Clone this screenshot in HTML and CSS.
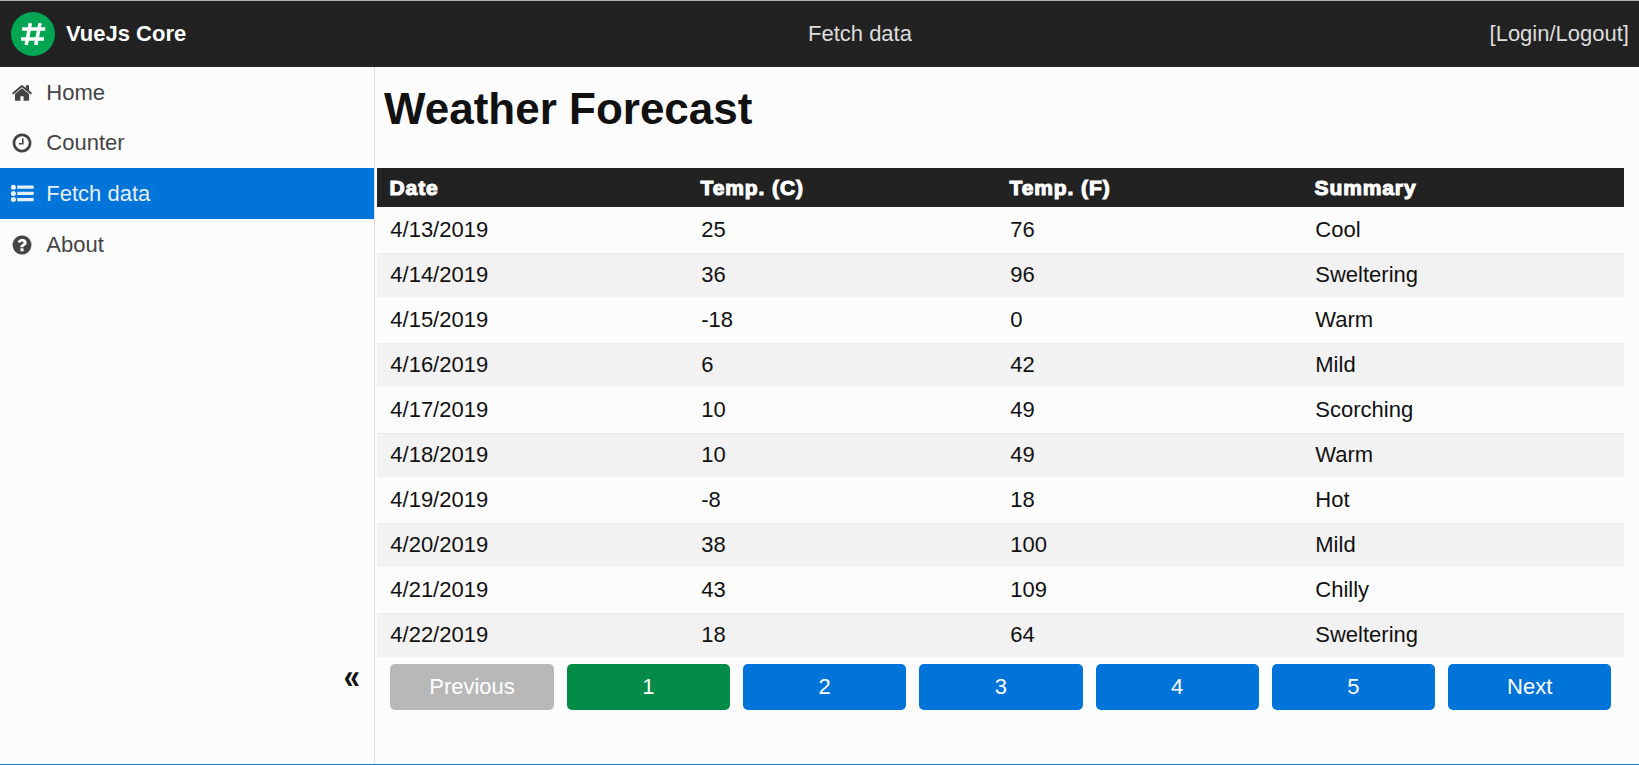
FILE: index.html
```html
<!DOCTYPE html>
<html lang="en">
<head>
<meta charset="utf-8">
<title>VueJs Core</title>
<link rel="stylesheet" href="styles.css">
</head>
<body>
<header class="topbar">
  <div class="brand">
    <svg class="logo" viewBox="0 0 44 44"><circle cx="22" cy="22" r="22" fill="#00a651"/><path d="M19.4 11.2 15.2 32.8M29 11.2 24.8 32.8M11.2 17H34.2M10 27H33" fill="none" stroke="#fff" stroke-width="3.5"/></svg>
    <span>VueJs Core</span>
  </div>
  <div class="title">Fetch data</div>
  <div class="login">[Login/Logout]</div>
</header>
<div class="shell">
  <aside class="sidebar">
    <nav>
      <a class="item"><svg class="icon" viewBox="0 0 1792 1792"><path d="M1472 992v480q0 26-19 45t-45 19h-384v-384h-256v384h-384q-26 0-45-19t-19-45v-480q0-1 .5-3t.5-3l575-474 575 474q1 2 1 6zm223-69l-62 74q-8 9-21 11h-3q-13 0-21-7l-692-577-692 577q-12 8-24 7-13-2-21-11l-62-74q-8-10-7-23.5t11-21.5l719-599q32-26 76-26t76 26l244 204v-195q0-14 9-23t23-9h192q14 0 23 9t9 23v408l219 182q10 8 11 21.5t-7 23.5z"/></svg>Home</a>
      <a class="item"><svg class="icon" viewBox="0 0 1792 1792"><path d="M1024 544v448q0 14-9 23t-23 9h-320q-14 0-23-9t-9-23v-64q0-14 9-23t23-9h224v-352q0-14 9-23t23-9h64q14 0 23 9t9 23zm416 352q0-148-73-273t-198-198-273-73-273 73-198 198-73 273 73 273 198 198 273 73 273-73 198-198 73-273zm224 0q0 209-103 385.5t-279.5 279.5-385.5 103-385.5-103-279.5-279.5-103-385.5 103-385.5 279.5-279.5 385.5-103 385.5 103 279.5 279.5 103 385.5z"/></svg>Counter</a>
      <a class="item active"><svg class="icon" viewBox="0 0 22 22"><circle cx="2.4" cy="4.2" r="2.5"/><circle cx="2.4" cy="10.4" r="2.5"/><circle cx="2.4" cy="16.6" r="2.5"/><rect x="6.2" y="2.5" width="16.5" height="3.3" rx=".5"/><rect x="6.2" y="8.7" width="16.5" height="3.3" rx=".5"/><rect x="6.2" y="14.9" width="16.5" height="3.3" rx=".5"/></svg>Fetch data</a>
      <a class="item"><svg class="icon" viewBox="0 0 1792 1792"><path d="M1024 1376v-192q0-14-9-23t-23-9h-192q-14 0-23 9t-9 23v192q0 14 9 23t23 9h192q14 0 23-9t9-23zm256-672q0-88-55.5-163t-138.5-116-170-41q-243 0-371 213-15 24 8 42l132 100q7 6 19 6 16 0 25-12 53-68 86-92 34-24 86-24 48 0 85.5 26t37.5 59q0 38-20 61t-68 45q-63 28-115.5 86.5t-52.5 125.5v36q0 14 9 23t23 9h192q14 0 23-9t9-23q0-19 21.5-49.5t54.5-49.5q32-18 49-28.5t46-35 44.5-48 28-60.5 12.5-81zm384 192q0 209-103 385.5t-279.5 279.5-385.5 103-385.5-103-279.5-279.5-103-385.5 103-385.5 279.5-279.5 385.5-103 385.5 103 279.5 279.5 103 385.5z"/></svg>About</a>
    </nav>
    <div class="collapse">«</div>
  </aside>
  <main class="content">
    <h1>Weather Forecast</h1>
    <div class="table">
      <div class="row head"><span>Date</span><span>Temp. (C)</span><span>Temp. (F)</span><span>Summary</span></div>
      <div class="row"><span>4/13/2019</span><span>25</span><span>76</span><span>Cool</span></div>
      <div class="row odd"><span>4/14/2019</span><span>36</span><span>96</span><span>Sweltering</span></div>
      <div class="row"><span>4/15/2019</span><span>-18</span><span>0</span><span>Warm</span></div>
      <div class="row odd"><span>4/16/2019</span><span>6</span><span>42</span><span>Mild</span></div>
      <div class="row"><span>4/17/2019</span><span>10</span><span>49</span><span>Scorching</span></div>
      <div class="row odd"><span>4/18/2019</span><span>10</span><span>49</span><span>Warm</span></div>
      <div class="row"><span>4/19/2019</span><span>-8</span><span>18</span><span>Hot</span></div>
      <div class="row odd"><span>4/20/2019</span><span>38</span><span>100</span><span>Mild</span></div>
      <div class="row"><span>4/21/2019</span><span>43</span><span>109</span><span>Chilly</span></div>
      <div class="row odd"><span>4/22/2019</span><span>18</span><span>64</span><span>Sweltering</span></div>
    </div>
    <div class="pager">
      <button class="page disabled">Previous</button>
      <button class="page current">1</button>
      <button class="page">2</button>
      <button class="page">3</button>
      <button class="page">4</button>
      <button class="page">5</button>
      <button class="page">Next</button>
    </div>
  </main>
</div>
</body>
</html>
```
FILE: styles.css
```css
* { box-sizing: border-box; }
body {
  margin: 0;
  height: 765px;
  display: flex;
  flex-direction: column;
  overflow: hidden;
  background: #fcfcfc;
  border-bottom: 1px solid #0f7fd9;
  color: #111;
  font: 22px/26px "Liberation Sans", Arial, sans-serif;
}
.topbar {
  height: 67px;
  flex: none;
  display: grid;
  grid-template-columns: 797px auto 1fr;
  align-items: center;
  padding: 0 10px 0 11px;
  background: #222;
  border-top: 1px solid #a9b1af;
  color: #ddd;
}
.brand {
  display: flex;
  align-items: center;
  gap: 11px;
  color: #fff;
  font-weight: bold;
}
.logo { width: 44px; height: 44px; }
.login { text-align: right; }
.shell { flex: 1; display: flex; min-height: 0; }
.sidebar {
  width: 375px;
  flex: none;
  display: flex;
  flex-direction: column;
  justify-content: space-between;
  border-right: 1px solid #e4dcde;
}
.item {
  height: 50.67px;
  display: flex;
  align-items: center;
  gap: 13.3px;
  padding: 1px 0 0 11px;
  color: #444;
}
.item.active { background: #0074d9; color: #e6eef8; }
.icon { width: 22px; height: 22px; fill: currentColor; overflow: visible; }
.collapse {
  margin-bottom: 75px;
  padding-right: 14px;
  text-align: right;
  font-size: 29px;
  line-height: 26px;
  font-weight: bold;
  transform: scaleY(1.2);
}
.content { flex: 1; padding: 0 15px 0 2px; }
h1 {
  margin: 0;
  height: 101px;
  padding: 17px 0 0 7px;
  font-size: 44px;
  line-height: 50px;
}
.row {
  height: 45px;
  display: grid;
  grid-template-columns: 311px 309px 305px 1fr;
  align-items: center;
  padding: 0 0 2px 13.3px;
}
.row.odd {
  background: #f2f2f2;
  border-top: 1px solid #ebebeb;
  border-bottom: 1px solid #fcfcfc;
}
.row.head {
  height: 40px;
  padding: 0 0 0 12.5px;
  background: #222;
  border-bottom: 1px solid #fcfcfc;
  color: #fff;
  font-size: 21px;
  font-weight: bold;
  letter-spacing: .9px;
  -webkit-text-stroke: 1.1px #fff;
}
.pager { display: flex; gap: 13px; padding: 6px 12.6px 0 13.4px; }
.page {
  flex: 1 1 0;
  min-width: 0;
  height: 46px;
  padding: 0;
  border: 0;
  border-radius: 5px;
  background: #0074d9;
  color: #fff;
  font: inherit;
}
.page.current { background: #048b48; }
.page.disabled { background: #b8b8b8; }
```
